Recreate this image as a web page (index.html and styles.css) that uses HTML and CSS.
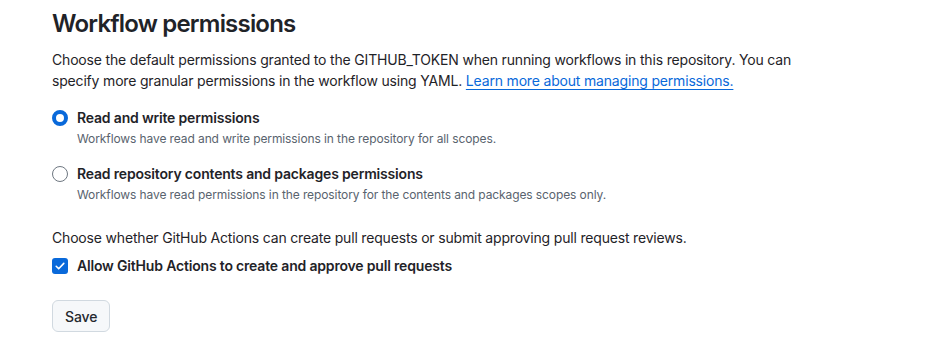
FILE: index.html
```html
<!DOCTYPE html>
<html lang="en">
<head>
    <meta charset="UTF-8">
    <title>Workflow permissions</title>
    <link rel="stylesheet" href="styles.css">
</head>
<body>
    <div class="container">
        <h2 class="title">Workflow permissions</h2>
        <p class="intro">Choose the default permissions granted to the GITHUB_TOKEN when running workflows in this repository. You can specify more granular permissions in the workflow using YAML. <a href="#">Learn more about managing permissions.</a></p>

        <div class="option">
            <span class="radio checked"></span>
            <div class="option-text">
                <div class="option-label">Read and write permissions</div>
                <div class="option-note">Workflows have read and write permissions in the repository for all scopes.</div>
            </div>
        </div>

        <div class="option">
            <span class="radio"></span>
            <div class="option-text">
                <div class="option-label">Read repository contents and packages permissions</div>
                <div class="option-note">Workflows have read permissions in the repository for the contents and packages scopes only.</div>
            </div>
        </div>

        <p class="intro second">Choose whether GitHub Actions can create pull requests or submit approving pull request reviews.</p>

        <div class="option check-row">
            <span class="checkbox">
                <svg width="12" height="12" viewBox="0 0 12 12"><path d="M2.2 6.3l2.5 2.5 5.1-5.4" fill="none" stroke="#ffffff" stroke-width="1.6" stroke-linecap="round" stroke-linejoin="round"/></svg>
            </span>
            <div class="option-label">Allow GitHub Actions to create and approve pull requests</div>
        </div>

        <button class="save">Save</button>
    </div>
</body>
</html>
```

FILE: styles.css
```css
body {
    font-family: Inter, -apple-system, 'Segoe UI', 'Liberation Sans', sans-serif;
    background-color: #ffffff;
    color: #1f2328;
    margin: 0;
    padding: 0;
    font-size: 14px;
    letter-spacing: -0.18px;
}

.container {
    padding: 8px 40px 0 52px;
}

.title {
    margin: 0;
    font-size: 24px;
    font-weight: 600;
    line-height: 32px;
    letter-spacing: -0.8px;
}

.intro {
    margin: 9px 0 0 0;
    line-height: 21px;
    max-width: 765px;
}

.intro a {
    color: #0969da;
    text-decoration: underline;
    text-underline-offset: 3px;
}

.intro.second {
    margin-top: 23px;
}

.option {
    display: flex;
    align-items: flex-start;
    gap: 9px;
    margin-top: 17px;
}

.option + .option {
    margin-top: 16px;
}

.radio {
    flex: none;
    width: 14px;
    height: 14px;
    border: 1px solid #6e7781;
    border-radius: 50%;
    margin-top: 2px;
    box-sizing: content-box;
}

.radio.checked {
    width: 8px;
    height: 8px;
    border: 4px solid #0969da;
}

.option-label {
    font-weight: 600;
    line-height: 20px;
}

.option-note {
    font-size: 12px;
    color: #59636e;
    line-height: 18px;
    margin-top: 2px;
    letter-spacing: -0.1px;
}

.check-row {
    margin-top: 8px;
    align-items: center;
}

.checkbox {
    flex: none;
    width: 16px;
    height: 16px;
    border-radius: 3px;
    background-color: #0969da;
    display: flex;
    align-items: center;
    justify-content: center;
}

.save {
    margin-top: 24px;
    padding: 0 12px;
    height: 32px;
    border: 1px solid #d1d9e0;
    border-radius: 6px;
    background-color: #f6f8fa;
    color: #25292e;
    font-family: inherit;
    font-size: 14px;
    font-weight: 500;
    letter-spacing: -0.1px;
}
```
